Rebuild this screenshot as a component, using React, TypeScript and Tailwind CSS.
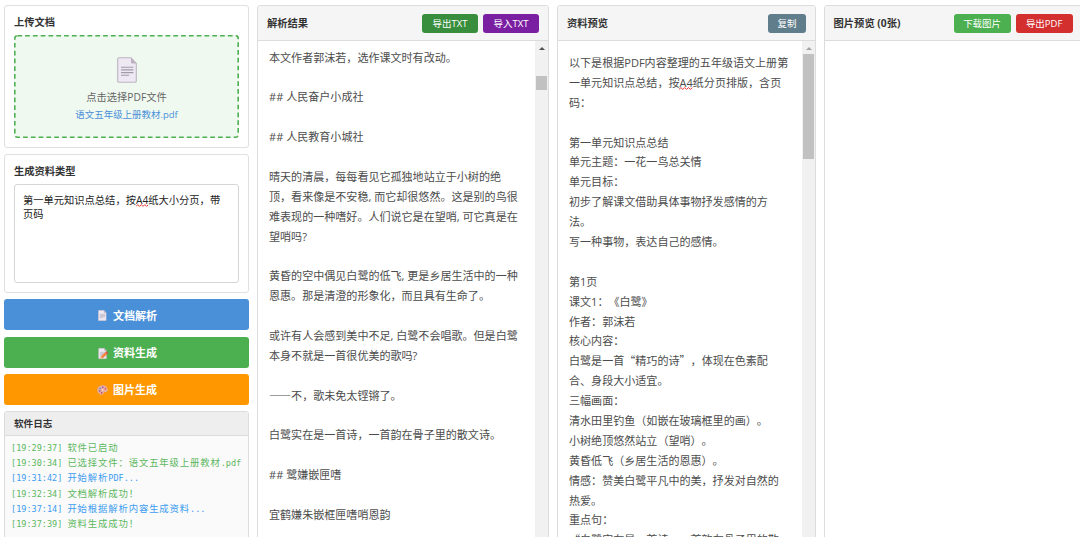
import React from 'react';

const CJK = "font-['Noto_Sans_CJK_SC',sans-serif]";

const parsedLines = [
    '本文作者郭沫若，选作课文时有改动。',
    '',
    '## 人民奋户小成社',
    '',
    '## 人民教育小城社',
    '',
    '晴天的清晨，每每看见它孤独地站立于小树的绝',
    '顶，看来像是不安稳, 而它却很悠然。这是别的鸟很',
    '难表现的一种嗜好。人们说它是在望哨, 可它真是在',
    '望哨吗?',
    '',
    '黄昏的空中偶见白鹭的低飞, 更是乡居生活中的一种',
    '恩惠。那是清澄的形象化，而且具有生命了。',
    '',
    '或许有人会感到美中不足, 白鹭不会唱歌。但是白鹭',
    '本身不就是一首很优美的歌吗?',
    '',
    '——不，歌未免太铿锵了。',
    '',
    '白鹭实在是一首诗，一首韵在骨子里的散文诗。',
    '',
    '## 鹭嫌嵌匣嗜',
    '',
    '宜鹤嫌朱嵌框匣嗜哨恩韵',
];

const previewLines = [
    '以下是根据PDF内容整理的五年级语文上册第',
    '一单元知识点总结，按A4纸分页排版，含页',
    '码：',
    '',
    '第一单元知识点总结',
    '单元主题：一花一鸟总关情',
    '单元目标：',
    '初步了解课文借助具体事物抒发感情的方',
    '法。',
    '写一种事物，表达自己的感情。',
    '',
    '第1页',
    '课文1：《白鹭》',
    '作者：郭沫若',
    '核心内容：',
    '白鹭是一首“精巧的诗”，体现在色素配',
    '合、身段大小适宜。',
    '三幅画面：',
    '清水田里钓鱼（如嵌在玻璃框里的画）。',
    '小树绝顶悠然站立（望哨）。',
    '黄昏低飞（乡居生活的恩惠）。',
    '情感：赞美白鹭平凡中的美，抒发对自然的',
    '热爱。',
    '重点句：',
    '“白鹭实在是一首诗，一首韵在骨子里的散',
];

const logs = [
    { time: '19:29:37', text: '软件已启动', color: 'text-[#5cb760]' },
    { time: '19:30:34', text: '已选择文件：语文五年级上册教材.pdf', color: 'text-[#5cb760]' },
    { time: '19:31:42', text: '开始解析PDF...', color: 'text-[#3c9cf0]' },
    { time: '19:32:34', text: '文档解析成功！', color: 'text-[#5cb760]' },
    { time: '19:37:14', text: '开始根据解析内容生成资料...', color: 'text-[#3c9cf0]' },
    { time: '19:37:39', text: '资料生成成功！', color: 'text-[#5cb760]' },
];

const Misspelled: React.FC<{ children: React.ReactNode }> = ({ children }) => (
    <span className="relative">
        {children}
        <svg className="absolute left-0 bottom-0 w-full h-[3px]" viewBox="0 0 14 3" preserveAspectRatio="none">
            <path d="M0 2.4 L2 .6 L4 2.4 L6 .6 L8 2.4 L10 .6 L12 2.4 L14 .6" fill="none" stroke="#e8302c" strokeWidth="1" />
        </svg>
    </span>
);

// full-width quotes and dashes come from the CJK font, A4 gets a spelling mark
const RichLine: React.FC<{ text: string }> = ({ text }) => (
    <>
        {text.split(/([“”]|——|A4)/).map((part, i) => {
            if (part === 'A4') return <Misspelled key={i}>A4</Misspelled>;
            if (/^[“”—]/.test(part)) return <span key={i} className={CJK}>{part}</span>;
            return part;
        })}
    </>
);

const Lines: React.FC<{ lines: string[] }> = ({ lines }) => (
    <div className="flex-1 min-w-0 overflow-hidden pl-[11px] text-[11.06px] leading-[19.9px] text-[#4c4c4c]">
        {lines.map((line, i) => (
            <p key={i} className="h-[19.9px] whitespace-pre"><RichLine text={line} /></p>
        ))}
    </div>
);

// monospace row: latin takes exactly half of a CJK cell
const MonoText: React.FC<{ text: string }> = ({ text }) => (
    <>
        {text.split(/([\x20-\x7e]+)/).map((part, i) =>
            /^[\x20-\x7e]/.test(part) ? (
                <span key={i} className="font-['DejaVu_Sans_Mono',monospace] text-[8.53px]">{part}</span>
            ) : (
                <span key={i} className="text-[9.4px] tracking-[.84px]">{part}</span>
            )
        )}
    </>
);

const PageIcon: React.FC<{ className: string; pencil?: boolean }> = ({ className, pencil }) => (
    <svg className={className} viewBox="0 0 20 26" fill="none">
        <path d="M2 .7h12L19.3 6.5V24a1.3 1.3 0 0 1-1.3 1.3H2A1.3 1.3 0 0 1 .7 24V2A1.3 1.3 0 0 1 2 .7Z" fill="#eee8f3" stroke="#bcb4c1" strokeWidth="1.1" />
        <path d="M14 .7v4.5a1.3 1.3 0 0 0 1.3 1.3h4Z" fill="#bbb1c2" />
        <path d="M4 10.2h12.4M4 12.9h12.4M4 15.6h12.4M4 18.3h8" stroke="#a29aa8" strokeWidth="1.1" />
        {pencil && (
            <>
                <path d="M6 20.5 17 9.5l4.5 4.5-11 10-6 1Z" fill="#f4813c" />
                <path d="m17 9.5 2-2 4.5 4.5-2 2Z" fill="#df3c50" />
                <path d="m4.5 25 1.5-4.5 4.5 3.5Z" fill="#f7cfa6" />
            </>
        )}
    </svg>
);

const PaletteIcon: React.FC = () => (
    <svg className="w-[11px] h-[10px]" viewBox="0 0 22 20">
        <path d="M11 .5C5 .5.500 5 .5 10.300.500 15.600 5.500 19.500 10 19.500c3.400 0 2.700-3.500 4.500-5 2-1.600 7 .6 7-4.700C21.500 4.500 17 .5 11 .5Z" fill="#e6ab9c" />
        <circle cx="6" cy="7" r="1.6" fill="#4b8fe0" />
        <circle cx="11.5" cy="4.6" r="1.6" fill="#8a4fc4" />
        <circle cx="16.7" cy="7.5" r="1.6" fill="#e0405c" />
        <circle cx="5.3" cy="12" r="1.6" fill="#7c4aa0" />
        <circle cx="9.3" cy="15.7" r="1.6" fill="#c83a5a" />
        <circle cx="11.5" cy="10" r="1.4" fill="#f6f0ea" />
    </svg>
);

const PanelButton: React.FC<{ className: string; children: React.ReactNode }> = ({ className, children }) => (
    <button className={`h-[19px] rounded-[3px] text-[9.48px] leading-[19px] text-white whitespace-nowrap ${className}`}>{children}</button>
);

const Panel: React.FC<{ title: string; className: string; actions: React.ReactNode; children?: React.ReactNode }> = ({ title, className, actions, children }) => (
    <section className={`shrink-0 flex flex-col h-[540px] border border-[#dcdcdc] rounded-[3px] overflow-hidden bg-white ${className}`}>
        <header className="shrink-0 h-[35px] flex items-center justify-between px-[9px] bg-[#f5f5f5] border-b border-[#dcdcdc]">
            <h2 className="pt-[2px] text-[10.27px] font-bold text-[#333]">{title}</h2>
            <div className="flex gap-[5px]">{actions}</div>
        </header>
        <div className="flex-1 min-h-0 flex">{children}</div>
    </section>
);

const Scrollbar: React.FC<{ arrow: string; thumb: string }> = ({ arrow, thumb }) => (
    <div className="shrink-0 w-[13px] h-full flex flex-col items-center bg-[#f1f1f1]">
        <svg className="shrink-0 mt-[6px] w-[6px] h-[3px]" viewBox="0 0 6 3"><path d="M0 3 3 0l3 3Z" fill={arrow} /></svg>
        <div className={`shrink-0 w-[11px] bg-[#c1c1c1] ${thumb}`} />
    </div>
);

const ActionButton: React.FC<{ className: string; icon: React.ReactNode; children: React.ReactNode }> = ({ className, icon, children }) => (
    <button className={`shrink-0 h-[31px] flex items-center justify-center gap-[5px] pt-[2px] pl-px rounded-[3px] text-[11.06px] font-bold text-white ${className}`}>
        <span className="w-[11px] flex justify-center">{icon}</span>
        {children}
    </button>
);

const App: React.FC = () => {
    return (
        <div lang="zh-CN" className="w-[1080px] h-[537px] overflow-hidden bg-white flex pt-[5px] pl-1 font-['Open_Sans','Noto_Sans_CJK_SC',sans-serif] [text-spacing-trim:space-all]">
            <aside className="shrink-0 w-[245px] h-[540px] flex flex-col">
                <section className="shrink-0 h-[143px] border border-[#e0e0e0] rounded-[3px] px-[9px] pt-2">
                    <h2 className="text-[10.27px] leading-[16px] font-bold text-[#333]">上传文档</h2>
                    <div className="relative mt-[5px] h-[103px] rounded-[3px] bg-[#f0f9f0] flex flex-col items-center">
                        <svg className="absolute inset-0 w-full h-full" viewBox="0 0 225 103">
                            <rect x=".8" y=".8" width="223.4" height="101.4" rx="2.5" fill="none" stroke="#4caf50" strokeWidth="1.6" strokeDasharray="4.7 3.1" />
                        </svg>
                        <PageIcon className="mt-[22px] w-5 h-[26px]" />
                        <p className="mt-[6px] text-[10.27px] leading-[17px] text-[#666]">点击选择PDF文件</p>
                        <p className="text-[9.48px] leading-[17px] text-[#4a90d9]">语文五年级上册教材.pdf</p>
                    </div>
                </section>
                <section className="shrink-0 mt-[6px] h-[139px] border border-[#e0e0e0] rounded-[3px] px-[9px] pt-2">
                    <h2 className="text-[10.27px] leading-[16px] font-bold text-[#333]">生成资料类型</h2>
                    <div className="mt-[5px] h-[99px] border border-[#d6d6d6] rounded-[3px] px-2 pt-[9px] text-[10.27px] leading-[13.5px] text-[#222] whitespace-nowrap">
                        <p><RichLine text="第一单元知识点总结，按A4纸大小分页，带" /></p>
                        <p>页码</p>
                    </div>
                </section>
                <div className="mt-[6.4px] flex flex-col gap-[6.2px]">
                    <ActionButton className="bg-[#4a90d9]" icon={<PageIcon className="w-[8.5px] h-[11px]" />}>文档解析</ActionButton>
                    <ActionButton className="bg-[#4caf50]" icon={<PageIcon pencil className="w-[9px] h-[11px] overflow-visible" />}>资料生成</ActionButton>
                    <ActionButton className="bg-[#ff9800]" icon={<PaletteIcon />}>图片生成</ActionButton>
                </div>
                <section className="mt-[6.2px] flex-1 border border-[#dcdcdc] rounded-[3px] bg-[#fafafa] overflow-hidden">
                    <h2 className="h-6 pl-[9px] bg-[#eeeeee] border-b border-[#dcdcdc] text-[9.6px] leading-[24px] font-bold text-[#333]">软件日志</h2>
                    <ul className="pt-1 pl-[6px]">
                        {logs.map((log) => (
                            <li key={log.time} className={`h-[15.2px] leading-[15.2px] text-[9.4px] whitespace-pre ${log.color}`}>
                                <MonoText text={`[${log.time}] ${log.text}`} />
                            </li>
                        ))}
                    </ul>
                </section>
            </aside>

            <Panel
                title="解析结果"
                className="ml-2 w-[292px]"
                actions={
                    <>
                        <PanelButton className="w-14 bg-[#388e3c]">导出TXT</PanelButton>
                        <PanelButton className="w-14 bg-[#7b1fa2]">导入TXT</PanelButton>
                    </>
                }
            >
                <div className="flex-1 min-w-0 flex pt-[6.5px]"><Lines lines={parsedLines} /></div>
                <Scrollbar arrow="#505050" thumb="mt-[26px] h-[14px]" />
            </Panel>

            <Panel
                title="资料预览"
                className="ml-2 w-[259px]"
                actions={<PanelButton className="w-[38px] bg-[#607d8b]">复制</PanelButton>}
            >
                <div className="flex-1 min-w-0 flex pt-3"><Lines lines={previewLines} /></div>
                <Scrollbar arrow="#a3a3a3" thumb="mt-1 h-[105px]" />
            </Panel>

            <Panel
                title="图片预览 (0张)"
                className="ml-[7.6px] w-[259px]"
                actions={
                    <>
                        <PanelButton className="w-[57px] bg-[#4caf50]">下载图片</PanelButton>
                        <PanelButton className="w-[57px] bg-[#d32f2f]">导出PDF</PanelButton>
                    </>
                }
            />
        </div>
    );
};

export default App;
